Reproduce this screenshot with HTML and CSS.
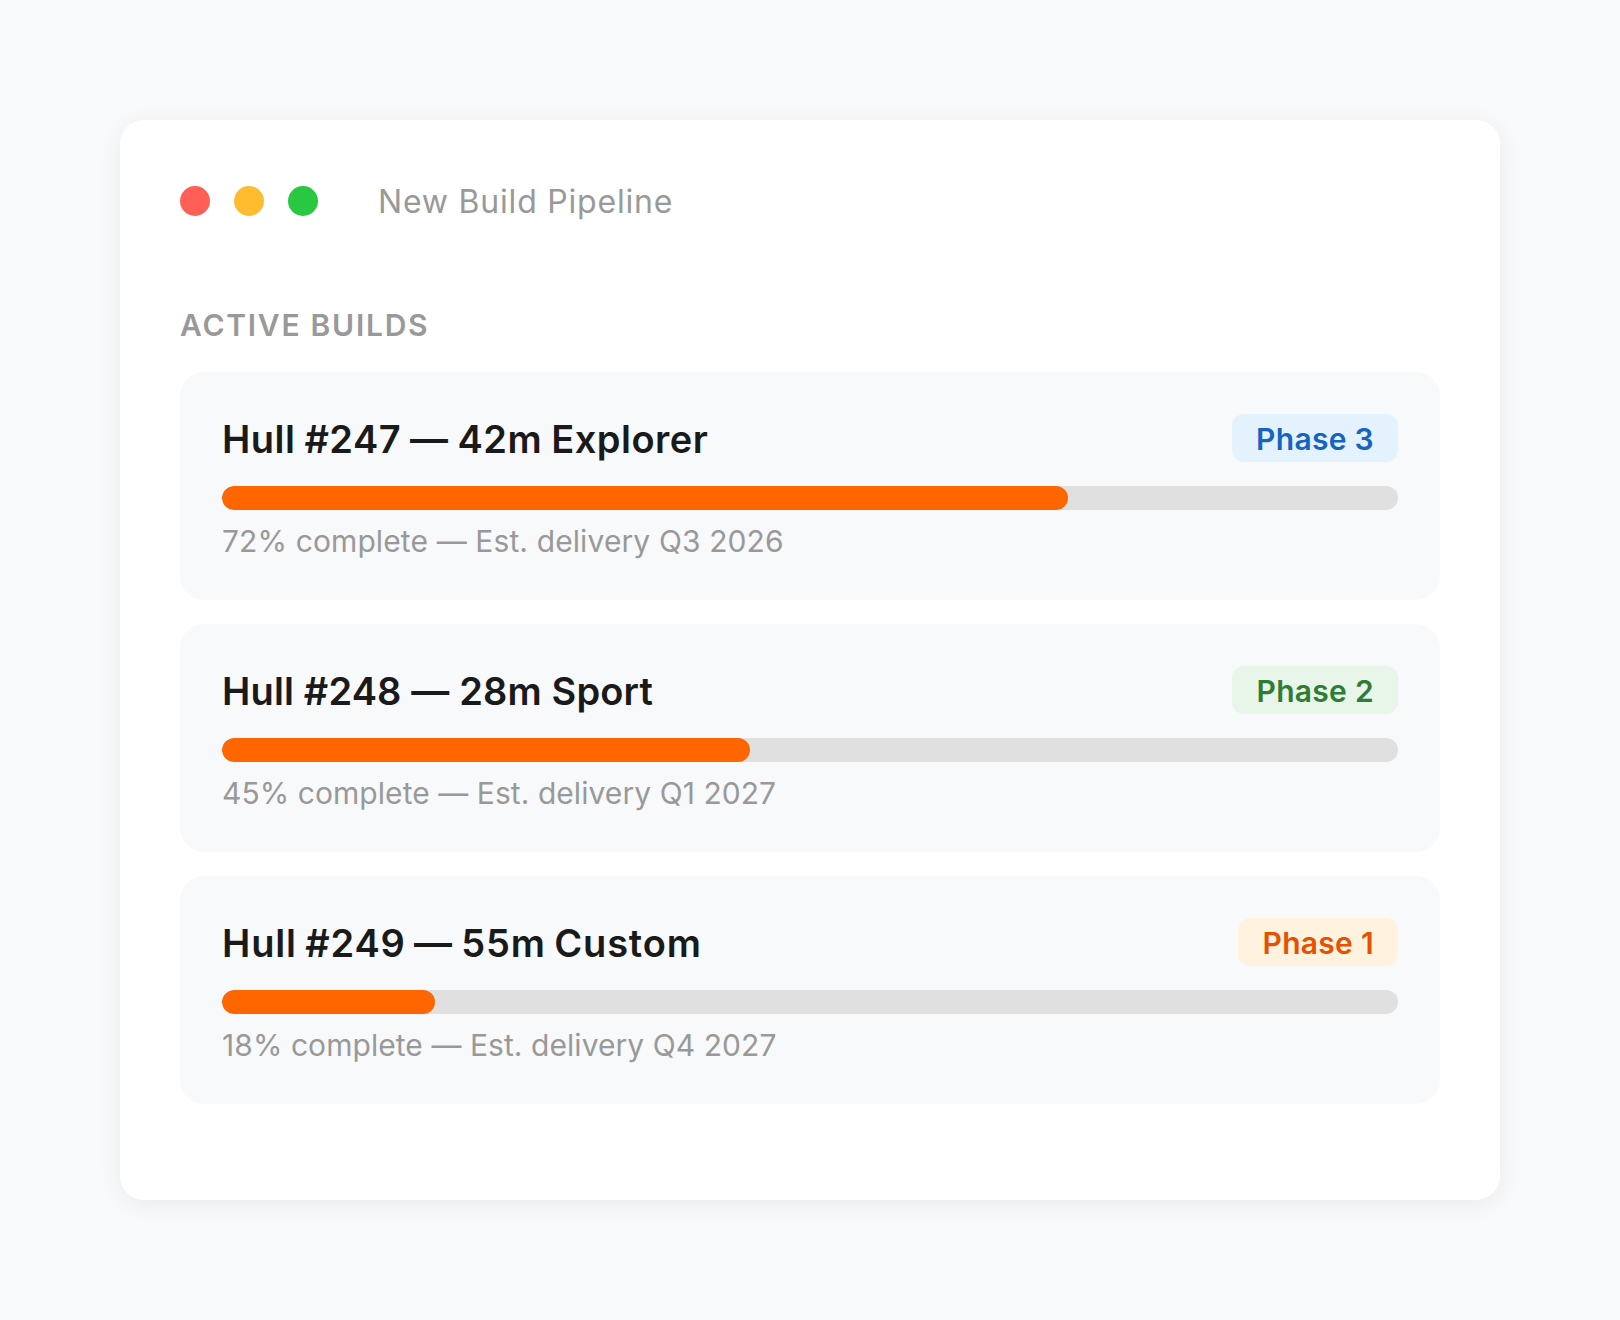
FILE: index.html
```html
<!DOCTYPE html>
<html lang="en">
<head>
<meta charset="utf-8">
<title>New Build Pipeline</title>
<link rel="stylesheet" href="styles.css">
</head>
<body>
<main class="window">
  <header class="titlebar">
    <div class="dots">
      <span class="dot dot-red"></span>
      <span class="dot dot-yellow"></span>
      <span class="dot dot-green"></span>
    </div>
    <span class="window-title">New Build Pipeline</span>
  </header>
  <h2 class="section-label">ACTIVE BUILDS</h2>
  <section class="builds">
    <article class="build">
      <div class="build-head">
        <h3 class="build-name">Hull #247 — 42m Explorer</h3>
        <span class="badge badge-blue">Phase 3</span>
      </div>
      <div class="track"><div class="fill" style="width:71.94%"></div></div>
      <p class="build-meta">72% complete — Est. delivery Q3 2026</p>
    </article>
    <article class="build">
      <div class="build-head">
        <h3 class="build-name">Hull #248 — 28m Sport</h3>
        <span class="badge badge-green">Phase 2</span>
      </div>
      <div class="track"><div class="fill" style="width:44.9%"></div></div>
      <p class="build-meta">45% complete — Est. delivery Q1 2027</p>
    </article>
    <article class="build">
      <div class="build-head">
        <h3 class="build-name">Hull #249 — 55m Custom</h3>
        <span class="badge badge-orange">Phase 1</span>
      </div>
      <div class="track"><div class="fill" style="width:18.11%"></div></div>
      <p class="build-meta">18% complete — Est. delivery Q4 2027</p>
    </article>
  </section>
</main>
</body>
</html>
```
FILE: styles.css
```css
* { box-sizing: border-box; }
html, body { margin: 0; }
body {
  min-height: 1320px;
  padding: 120px;
  background: #f8f9fa;
  font-family: Inter, "Liberation Sans", sans-serif;
}
.window {
  height: 1080px;
  padding: 60px;
  background: #fff;
  border-radius: 24px;
  box-shadow: 0 4px 24px rgba(0, 0, 0, 0.06);
}
.titlebar {
  display: flex;
  align-items: center;
  gap: 60px;
  height: 42px;
  margin-bottom: 85px;
}
.dots { display: flex; gap: 24px; }
.dot { width: 30px; height: 30px; border-radius: 50%; }
.dot-red { background: #ff5f57; }
.dot-yellow { background: #febc2e; }
.dot-green { background: #28c840; }
.window-title { font-size: 32px; color: #999; letter-spacing: 0.8px; }
.section-label {
  margin: 0 0 29px;
  font-size: 30px;
  line-height: 36px;
  font-weight: 600;
  letter-spacing: 1.74px;
  color: #999;
}
.builds { display: flex; flex-direction: column; gap: 24px; }
.build {
  height: 228px;
  padding: 42px;
  background: #f8f9fa;
  border-radius: 24px;
}
.build-head {
  display: flex;
  justify-content: space-between;
  align-items: center;
  height: 48px;
  margin-bottom: 24px;
}
.build-name {
  margin: 0;
  padding-top: 2px;
  font-size: 38px;
  font-weight: 600;
  color: #1a1a1a;
}
.build:nth-child(1) .build-name { letter-spacing: 0.47px; word-spacing: -1px; }
.build:nth-child(2) .build-name { letter-spacing: 0.15px; }
.build:nth-child(3) .build-name { letter-spacing: 0.83px; word-spacing: -2px; }
.badge {
  padding: 0 24px;
  height: 48px;
  line-height: 50px;
  border-radius: 12px;
  font-size: 30px;
  font-weight: 600;
  letter-spacing: 0.3px;
}
.badge-blue { background: #e3f2fd; color: #1565c0; }
.badge-green { background: #e8f5e9; color: #2e7d32; }
.badge-orange { background: #fff3e0; color: #e65100; }
.track { height: 24px; background: #e0e0e0; border-radius: 12px; overflow: hidden; }
.fill { height: 100%; background: #ff6600; border-radius: 12px; }
.build-meta {
  margin: 13px 0 0;
  font-size: 30px;
  line-height: 36px;
  letter-spacing: 0.06px;
  color: #999;
}
.build:nth-child(1) .build-meta { letter-spacing: 0.115px; }
```
